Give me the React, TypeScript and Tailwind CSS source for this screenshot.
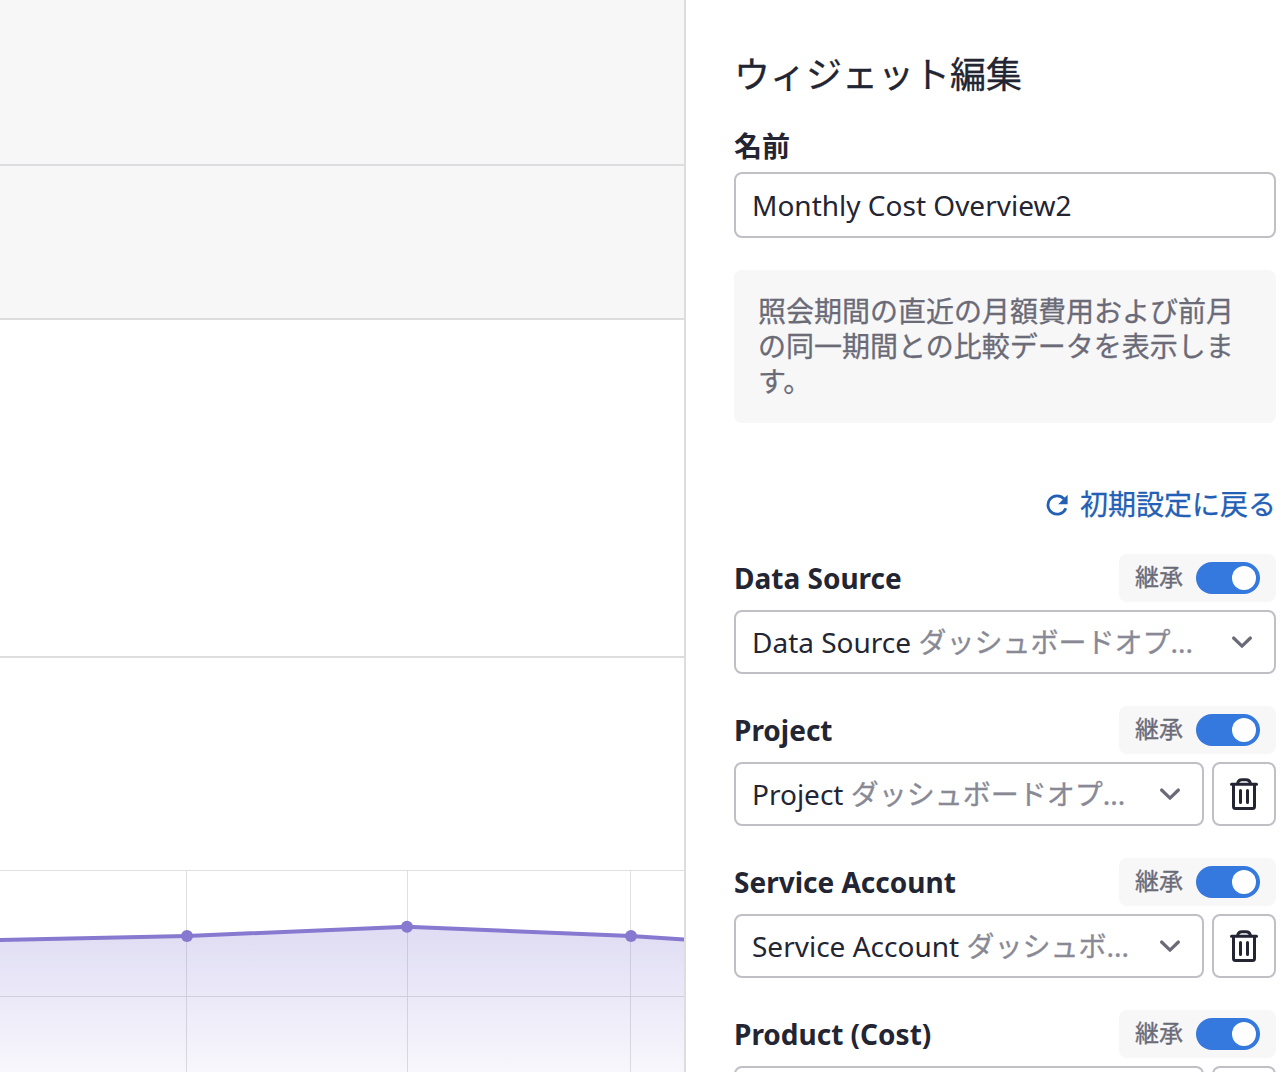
type Filter = { label: string; hint?: string; removable: boolean };

const filters: Filter[] = [
  { label: "Data Source", hint: "ダッシュボードオプ...", removable: false },
  { label: "Project", hint: "ダッシュボードオプ...", removable: true },
  { label: "Service Account", hint: "ダッシュボ...", removable: true },
  { label: "Product (Cost)", removable: true },
];

function CostChart() {
  return (
    <svg className="block h-[202px] w-[684px]" viewBox="0 870 684 202" aria-hidden="true">
      <defs>
        <linearGradient id="area" gradientUnits="userSpaceOnUse" x1="0" y1="926" x2="0" y2="1072">
          <stop offset="0" stopColor="#8378d2" stopOpacity="0.26" />
          <stop offset="1" stopColor="#8378d2" stopOpacity="0.06" />
        </linearGradient>
      </defs>
      <path d="M0 870.5H684M0 996.5H684M186.5 870V1072M407.5 870V1072M630.5 870V1072" stroke="#e0e0e0" fill="none" />
      <path d="M0 940L187 936L407 926.7L631 936L684 939.5V1072H0Z" fill="url(#area)" />
      <path d="M-5 940.1L187 936L407 926.7L631 936L690 939.8" stroke="#8679cf" strokeWidth="4" fill="none" />
      <g fill="#8679cf">
        <circle cx="187" cy="936" r="6" />
        <circle cx="407" cy="926.7" r="6" />
        <circle cx="631" cy="936" r="6" />
      </g>
    </svg>
  );
}

function RefreshIcon() {
  return (
    <svg className="h-6 w-6" viewBox="0 0 24 24" fill="none" aria-hidden="true">
      <path d="M19 5.8A9.2 9.2 0 1 0 20.8 15.2" stroke="#2360b5" strokeWidth="2.8" />
      <path d="M22.6 1.8v9.4h-9.4z" fill="#2360b5" />
    </svg>
  );
}

function TrashIcon() {
  return (
    <svg
      className="h-8 w-8"
      viewBox="0 0 32 32"
      fill="none"
      stroke="#232533"
      strokeWidth="3"
      strokeLinecap="round"
      aria-hidden="true"
    >
      <path d="M3.5 6.3H28.5" />
      <path d="M9.5 5.8C10 3 11.7 1.7 14 1.7H18C20.3 1.7 22 3 22.5 5.8" />
      <path d="M5.5 6.5V28.5C5.5 29.8 6.2 30.5 7.5 30.5H24.5C25.8 30.5 26.5 29.8 26.5 28.5V6.5" />
      <path d="M12.5 12.5V24.5M19.5 12.5V24.5" />
    </svg>
  );
}

function FilterField({ label, hint, removable }: Filter) {
  return (
    <div className="mb-8">
      <div className="flex h-12 items-center justify-between">
        <span className="text-[28px] leading-[48px] font-bold">{label}</span>
        <div className="flex h-12 items-center gap-[13px] rounded-lg bg-[#f7f7f7] px-4">
          <span className="pb-0.5 text-2xl text-[#6b6b78] [-webkit-text-stroke:0.3px]">継承</span>
          <div className="flex h-8 w-16 items-center justify-end rounded-full bg-[#3579de] px-1">
            <div className="h-6 w-6 rounded-full bg-white" />
          </div>
        </div>
      </div>
      <div className="mt-2 flex gap-2">
        <div className="flex h-16 min-w-0 flex-1 items-center rounded-lg border-2 border-[#bfbfc5] pr-5 pl-4">
          {hint && (
            <span className="whitespace-nowrap text-[28px] leading-[38px]">
              {label} <span className="text-[#898995] [-webkit-text-stroke:0.3px]">{hint}</span>
            </span>
          )}
          <svg className="ml-auto h-6 w-6" viewBox="0 0 24 24" fill="none" aria-hidden="true">
            <path
              d="M3.6 8L12 16.2L20.4 8"
              stroke="#6b6b78"
              strokeWidth="3.2"
              strokeLinecap="round"
              strokeLinejoin="round"
            />
          </svg>
        </div>
        {removable && (
          <div className="flex h-16 w-16 items-center justify-center rounded-lg border-2 border-[#bfbfc5]">
            <TrashIcon />
          </div>
        )}
      </div>
    </div>
  );
}

export default function App() {
  return (
    <div className="flex h-[1072px] w-[1288px] overflow-hidden bg-white font-['Noto_Sans','Noto_Sans_CJK_JP',sans-serif] text-[#232533]">
      <main className="w-[686px] shrink-0 border-r-2 border-[#dddddf]">
        <div className="h-[166px] border-b-2 border-[#dddddf] bg-[#f7f7f7]" />
        <div className="h-[154px] border-b-2 border-[#dddddf] bg-[#f7f7f7]" />
        <div className="h-[338px] border-b-2 border-[#dddddf]" />
        <div className="h-[212px]" />
        <CostChart />
      </main>
      <aside className="flex-1 pt-12 pr-3 pl-12">
        <h1 className="h-[54px] text-[36px] leading-[54px] [-webkit-text-stroke:0.3px]">ウィジェット編集</h1>
        <div className="mt-6 h-[46px] text-[28px] leading-[40px] font-bold">名前</div>
        <div className="flex h-[66px] items-center rounded-lg border-2 border-[#bfbfc5] px-4 text-[28px]">Monthly Cost Overview2</div>
        <p className="mt-8 h-[153px] rounded-lg bg-[#f7f7f7] p-6 text-[28px] leading-[35px] text-[#6b6b78] [-webkit-text-stroke:0.3px]">
          照会期間の直近の月額費用および前月の同一期間との比較データを表示します。
        </p>
        <div className="mt-[61px] mb-[28px] flex h-[42px] items-center justify-end gap-[11px] text-[28px] text-[#2360b5]">
          <RefreshIcon />
          <span className="pb-0.5 [-webkit-text-stroke:0.3px]">初期設定に戻る</span>
        </div>
        {filters.map((filter) => (
          <FilterField key={filter.label} {...filter} />
        ))}
      </aside>
    </div>
  );
}
